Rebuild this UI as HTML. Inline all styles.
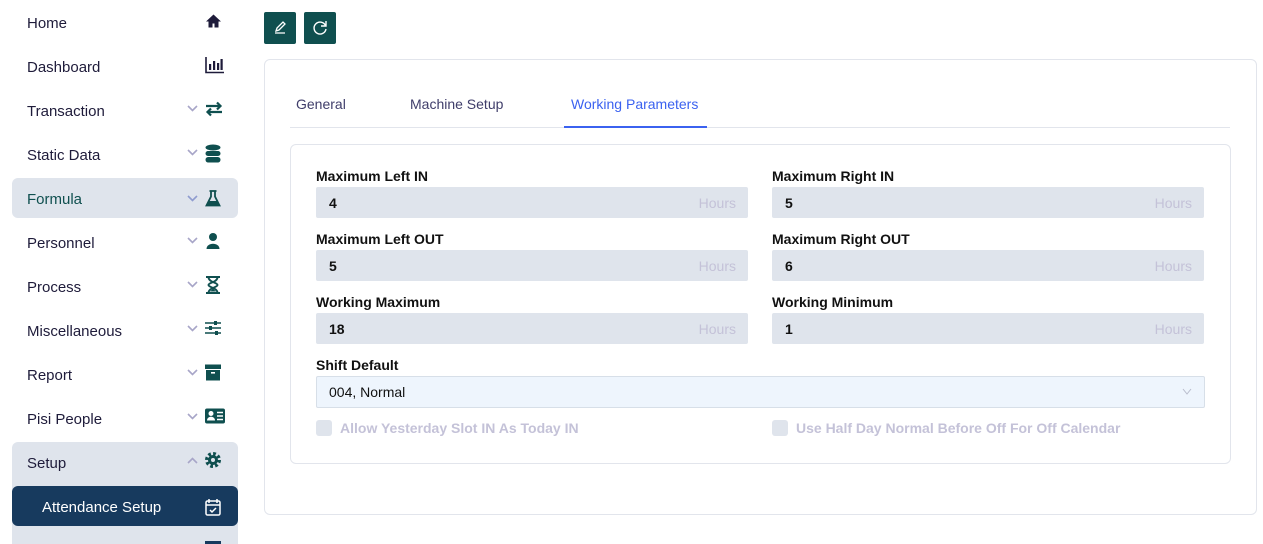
<!DOCTYPE html>
<html><head><style>
*{box-sizing:border-box;margin:0;padding:0}
body{width:1263px;height:544px;overflow:hidden;background:#fff;font-family:"Liberation Sans",sans-serif;position:relative;color:#1e1b3a}
.ni{position:absolute;left:12px;width:226px;height:40px;font-size:15px;line-height:44px;padding-left:15px;padding-top:2px}
.ni .ch{position:absolute;left:175px;top:17px}
.ni svg.ic{position:absolute;left:193px;top:12px}
.hl{background:#dfe4ec;border-radius:6px}
.abs{position:absolute}
.lbl{position:absolute;font-weight:bold;font-size:14px;color:#111}
.inp{position:absolute;height:31px;width:432px;background:#dfe4ec;border-radius:2px;font-size:14px;font-weight:bold;line-height:33px;padding-left:13px;color:#111}
.inp span{position:absolute;right:12px;font-weight:normal;color:#c4c2d8}
.cb{position:absolute;font-size:14px;font-weight:bold;color:#c4c2d8;padding-left:24px;line-height:16px}
.cb:before{content:"";position:absolute;left:0;top:0;width:16px;height:16px;background:#dfe4ec;border-radius:3px}
</style></head><body>
<div class="abs" style="left:12px;top:442px;width:226px;height:102px;background:#dfe4ec;border-radius:6px 6px 0 0"></div>
<div class="ni" style="top:0px">Home<svg class="ic" style="top:13px" width="17" height="16" viewBox="0 0 16 16"><path d="M8 1.5L0.5 8.5h2.5v6h4v-4h2v4h4v-6h2.5z" fill="#1e1b3a"/></svg></div>
<div class="ni" style="top:44px">Dashboard<svg class="ic" width="20" height="18" viewBox="0 0 20 18"><path d="M1 1v15.5h18" stroke="#1e1b3a" stroke-width="1.6" fill="none"/><rect x="4" y="8" width="2.2" height="6" fill="#1e1b3a"/><rect x="8" y="5" width="2.2" height="9" fill="#1e1b3a"/><rect x="12" y="7" width="2.2" height="7" fill="#1e1b3a"/><rect x="15.5" y="3" width="2.2" height="11" fill="#1e1b3a"/></svg></div>
<div class="ni" style="top:88px">Transaction<svg class="ch" width="11" height="7" viewBox="0 0 11 7"><path d="M1 1l4.5 4.5L10 1" stroke="#a8a6c8" stroke-width="1.6" fill="none"/></svg><svg class="ic" width="18" height="18" viewBox="0 0 18 18"><path d="M1 6h14M12 2.5l3.5 3.5-3.5 3.5M17 12H3M6 8.5l-3.5 3.5 3.5 3.5" stroke="#0f4f4f" stroke-width="2.2" fill="none"/></svg></div>
<div class="ni" style="top:132px">Static Data<svg class="ch" width="11" height="7" viewBox="0 0 11 7"><path d="M1 1l4.5 4.5L10 1" stroke="#a8a6c8" stroke-width="1.6" fill="none"/></svg><svg class="ic" width="16" height="19" viewBox="0 0 16 19"><ellipse cx="8" cy="3.5" rx="7.5" ry="3" fill="#0f4f4f"/><rect x="0.5" y="7" width="15" height="5" rx="2.5" fill="#0f4f4f"/><rect x="0.5" y="13" width="15" height="5.5" rx="2.7" fill="#0f4f4f"/></svg></div>
<div class="ni hl" style="top:178px;line-height:40px;color:#0f4f4f">Formula<svg class="ch" width="11" height="7" viewBox="0 0 11 7"><path d="M1 1l4.5 4.5L10 1" stroke="#8f9ccf" stroke-width="1.6" fill="none"/></svg><svg class="ic" width="16" height="17" viewBox="0 0 16 17"><path d="M4.5 1h7M6 1v5.5L1.5 15.5h13L10 6.5V1" stroke="#0f4f4f" stroke-width="1.8" fill="none"/><path d="M3.5 11h9l2 4.5h-13z" fill="#0f4f4f"/></svg></div>
<div class="ni" style="top:220px">Personnel<svg class="ch" width="11" height="7" viewBox="0 0 11 7"><path d="M1 1l4.5 4.5L10 1" stroke="#a8a6c8" stroke-width="1.6" fill="none"/></svg><svg class="ic" width="16" height="18" viewBox="0 0 16 18"><circle cx="8" cy="5" r="4" fill="#0f4f4f"/><path d="M1.5 17c0-7 13-7 13 0z" fill="#0f4f4f"/></svg></div>
<div class="ni" style="top:264px">Process<svg class="ch" width="11" height="7" viewBox="0 0 11 7"><path d="M1 1l4.5 4.5L10 1" stroke="#a8a6c8" stroke-width="1.6" fill="none"/></svg><svg class="ic" width="16" height="18" viewBox="0 0 16 18"><path d="M1 1h14M1 17h14M3.5 1c0 5.5 9 5.5 9 8s-9 2.5-9 8M12.5 1c0 5.5-9 5.5-9 8s9 2.5 9 8" stroke="#0f4f4f" stroke-width="1.9" fill="none"/><path d="M5 15.5l3-3 3 3z" fill="#0f4f4f"/></svg></div>
<div class="ni" style="top:308px">Miscellaneous<svg class="ch" width="11" height="7" viewBox="0 0 11 7"><path d="M1 1l4.5 4.5L10 1" stroke="#a8a6c8" stroke-width="1.6" fill="none"/></svg><svg class="ic" width="16" height="16" viewBox="0 0 16 16"><path d="M0 3h16M0 8h16M0 13h16" stroke="#0f4f4f" stroke-width="1.6"/><rect x="9" y="1" width="3" height="4" fill="#0f4f4f"/><rect x="4" y="6" width="3" height="4" fill="#0f4f4f"/><rect x="10" y="11" width="3" height="4" fill="#0f4f4f"/></svg></div>
<div class="ni" style="top:352px">Report<svg class="ch" width="11" height="7" viewBox="0 0 11 7"><path d="M1 1l4.5 4.5L10 1" stroke="#a8a6c8" stroke-width="1.6" fill="none"/></svg><svg class="ic" width="16" height="17" viewBox="0 0 16 17"><rect x="0" y="0.5" width="16" height="4.5" fill="#0f4f4f"/><rect x="1" y="6" width="14" height="10.5" fill="#0f4f4f"/><rect x="6" y="8" width="4" height="1.6" fill="#fff"/></svg></div>
<div class="ni" style="top:396px">Pisi People<svg class="ch" width="11" height="7" viewBox="0 0 11 7"><path d="M1 1l4.5 4.5L10 1" stroke="#a8a6c8" stroke-width="1.6" fill="none"/></svg><svg class="ic" width="20" height="16" viewBox="0 0 20 16"><rect x="0" y="0.5" width="20" height="15" rx="2" fill="#0f4f4f"/><circle cx="6" cy="5.5" r="2.5" fill="#fff"/><path d="M2 12.5c0-5 8-5 8 0z" fill="#fff"/><path d="M12 4.5h6M12 8h6M12 11.5h6" stroke="#fff" stroke-width="1.4"/></svg></div>
<div class="ni" style="top:440px">Setup<svg class="ch" width="11" height="7" viewBox="0 0 11 7"><path d="M1 6l4.5-4.5L10 6" stroke="#a8a6c8" stroke-width="1.6" fill="none"/></svg><svg class="ic" width="16" height="16" viewBox="0 0 16 16"><circle cx="8" cy="8" r="6" fill="none" stroke="#0f4f4f" stroke-width="4" stroke-dasharray="2.6 2.1"/><circle cx="8" cy="8" r="5" fill="#0f4f4f"/><circle cx="8" cy="8" r="2" fill="#dfe4ec"/></svg></div>
<div class="ni" style="top:486px;line-height:40px;background:#173a5e;color:#fff;border-radius:6px;padding-left:30px">Attendance Setup<svg class="ic" width="16" height="18" viewBox="0 0 16 18"><rect x="1" y="3" width="14" height="14" rx="1.5" stroke="#fff" stroke-width="1.5" fill="none"/><path d="M1 7h14M4 1v4M12 1v4M5 12l2 2 4-4" stroke="#fff" stroke-width="1.5" fill="none"/></svg></div>
<div class="abs" style="left:205px;top:541px;width:16px;height:3px;background:#173a5e"></div>

<div class="abs" style="left:264px;top:12px;width:32px;height:32px;background:#0f4f4f;border-radius:2px"><svg width="32" height="32" viewBox="0 0 32 32"><path d="M11 21h10M12 19l1-3 6-6 2 2-6 6z" stroke="#fff" stroke-width="1.3" fill="none"/></svg></div>
<div class="abs" style="left:304px;top:12px;width:32px;height:32px;background:#0f4f4f;border-radius:2px"><svg width="32" height="32" viewBox="0 0 32 32"><path d="M21.5 13.5A6 6 0 1 0 22 17M22 9v5h-5" stroke="#fff" stroke-width="1.4" fill="none"/></svg></div>

<div class="abs" style="left:264px;top:59px;width:993px;height:456px;border:1px solid #e2e5ec;border-radius:6px"></div>
<div class="abs" style="left:290px;top:127px;width:940px;height:1px;background:#e2e5ec"></div>
<div class="abs" style="left:564px;top:126px;width:143px;height:2px;background:#3b62f0"></div>
<div class="abs" style="left:296px;top:96px;font-size:14px;color:#3f3d6a">General</div>
<div class="abs" style="left:410px;top:96px;font-size:14px;color:#3f3d6a">Machine Setup</div>
<div class="abs" style="left:571px;top:96px;font-size:14px;color:#3b62f0">Working Parameters</div>

<div class="abs" style="left:290px;top:144px;width:941px;height:320px;border:1px solid #e2e5ec;border-radius:6px"></div>
<div class="lbl" style="left:316px;top:168px">Maximum Left IN</div>
<div class="lbl" style="left:772px;top:168px">Maximum Right IN</div>
<div class="inp" style="left:316px;top:187px">4<span>Hours</span></div>
<div class="inp" style="left:772px;top:187px">5<span>Hours</span></div>
<div class="lbl" style="left:316px;top:231px">Maximum Left OUT</div>
<div class="lbl" style="left:772px;top:231px">Maximum Right OUT</div>
<div class="inp" style="left:316px;top:250px">5<span>Hours</span></div>
<div class="inp" style="left:772px;top:250px">6<span>Hours</span></div>
<div class="lbl" style="left:316px;top:294px">Working Maximum</div>
<div class="lbl" style="left:772px;top:294px">Working Minimum</div>
<div class="inp" style="left:316px;top:313px">18<span>Hours</span></div>
<div class="inp" style="left:772px;top:313px">1<span>Hours</span></div>
<div class="lbl" style="left:316px;top:357px">Shift Default</div>
<div class="abs" style="left:316px;top:376px;width:889px;height:32px;background:#eef5fd;border:1px solid #d7dfe8;border-radius:2px;font-size:14px;line-height:30px;padding-left:12px;color:#111">004, Normal<svg style="position:absolute;right:12px;top:11px" width="10" height="7" viewBox="0 0 10 7"><path d="M1 1l4 5 4-5" stroke="#b8bccc" fill="none"/></svg></div>
<div class="cb" style="left:316px;top:420px">Allow Yesterday Slot IN As Today IN</div>
<div class="cb" style="left:772px;top:420px">Use Half Day Normal Before Off For Off Calendar</div>
</body></html>
